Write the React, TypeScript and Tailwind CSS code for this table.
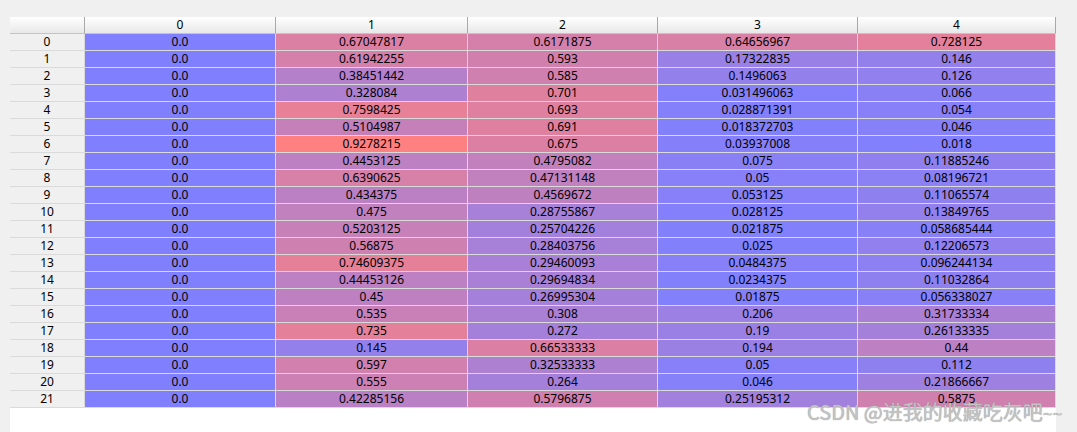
import React from "react";

const data: number[][] = [
  [0.67047817, 0.6171875, 0.64656967, 0.728125],
  [0.61942255, 0.593, 0.17322835, 0.146],
  [0.38451442, 0.585, 0.1496063, 0.126],
  [0.328084, 0.701, 0.031496063, 0.066],
  [0.7598425, 0.693, 0.028871391, 0.054],
  [0.5104987, 0.691, 0.018372703, 0.046],
  [0.9278215, 0.675, 0.03937008, 0.018],
  [0.4453125, 0.4795082, 0.075, 0.11885246],
  [0.6390625, 0.47131148, 0.05, 0.08196721],
  [0.434375, 0.4569672, 0.053125, 0.11065574],
  [0.475, 0.28755867, 0.028125, 0.13849765],
  [0.5203125, 0.25704226, 0.021875, 0.058685444],
  [0.56875, 0.28403756, 0.025, 0.12206573],
  [0.74609375, 0.29460093, 0.0484375, 0.096244134],
  [0.44453126, 0.29694834, 0.0234375, 0.11032864],
  [0.45, 0.26995304, 0.01875, 0.056338027],
  [0.535, 0.308, 0.206, 0.31733334],
  [0.735, 0.272, 0.19, 0.26133335],
  [0.145, 0.66533333, 0.194, 0.44],
  [0.597, 0.32533333, 0.05, 0.112],
  [0.555, 0.264, 0.046, 0.21866667],
  [0.42285156, 0.5796875, 0.25195312, 0.5875],
];

const labels: string[][] = [
  ["0.67047817", "0.6171875", "0.64656967", "0.728125"],
  ["0.61942255", "0.593", "0.17322835", "0.146"],
  ["0.38451442", "0.585", "0.1496063", "0.126"],
  ["0.328084", "0.701", "0.031496063", "0.066"],
  ["0.7598425", "0.693", "0.028871391", "0.054"],
  ["0.5104987", "0.691", "0.018372703", "0.046"],
  ["0.9278215", "0.675", "0.03937008", "0.018"],
  ["0.4453125", "0.4795082", "0.075", "0.11885246"],
  ["0.6390625", "0.47131148", "0.05", "0.08196721"],
  ["0.434375", "0.4569672", "0.053125", "0.11065574"],
  ["0.475", "0.28755867", "0.028125", "0.13849765"],
  ["0.5203125", "0.25704226", "0.021875", "0.058685444"],
  ["0.56875", "0.28403756", "0.025", "0.12206573"],
  ["0.74609375", "0.29460093", "0.0484375", "0.096244134"],
  ["0.44453126", "0.29694834", "0.0234375", "0.11032864"],
  ["0.45", "0.26995304", "0.01875", "0.056338027"],
  ["0.535", "0.308", "0.206", "0.31733334"],
  ["0.735", "0.272", "0.19", "0.26133335"],
  ["0.145", "0.66533333", "0.194", "0.44"],
  ["0.597", "0.32533333", "0.05", "0.112"],
  ["0.555", "0.264", "0.046", "0.21866667"],
  ["0.42285156", "0.5796875", "0.25195312", "0.5875"],
];

const VMAX = 0.9278215;

function colorFor(v: number): string {
  const t = Math.max(0, Math.min(1, v / VMAX));
  const r = Math.round(128 + 127 * t);
  const b = Math.round(255 - 127 * t);
  return `rgb(${r},128,${b})`;
}

export default function App() {
  return (
    <div
      className="relative w-[1077px] h-[432px] overflow-hidden bg-[#f0f0f0] pt-[17px] pl-[10px] text-[12px] text-black"
      style={{ fontFamily: '"Noto Sans", "Open Sans", sans-serif' }}
    >
      <div className="w-[1046px] h-[415px] bg-white">
        {/* header */}
        <div className="flex h-[17px] border-b border-[#c4c4c4] bg-gradient-to-b from-[#ffffff] to-[#e8e8e8] leading-[16px]">
          <div className="w-[74px] border-r border-[#a8a8a8] box-content" />
          <div className="w-[190px] border-r border-[#a8a8a8] box-content text-center">0</div>
          <div className="w-[191px] border-r border-[#a8a8a8] box-content text-center">1</div>
          <div className="w-[189px] border-r border-[#a8a8a8] box-content text-center">2</div>
          <div className="w-[199px] border-r border-[#a8a8a8] box-content text-center">3</div>
          <div className="w-[197px] border-r border-[#a8a8a8] box-content text-center">4</div>
        </div>
        {/* body */}
        <div className="grid grid-cols-[74px_190px_191px_189px_199px_197px] auto-rows-[16px] gap-px bg-[#dadada] pr-px pb-px leading-[16px]">
          {data.map((row, i) => (
            <React.Fragment key={i}>
              <div className="bg-[#f0f0f0] text-center">{i}</div>
              <div className="text-center" style={{ backgroundColor: colorFor(0) }}>
                0.0
              </div>
              {row.map((v, j) => (
                <div key={j} className="text-center" style={{ backgroundColor: colorFor(v) }}>
                  {labels[i][j]}
                </div>
              ))}
            </React.Fragment>
          ))}
        </div>
      </div>
      <div
        className="absolute left-[807px] top-[399px] text-[20px] leading-[26px] text-[#c4c4c4] whitespace-nowrap"
        style={{ fontFamily: '"Noto Sans CJK SC", sans-serif', textShadow: "0 0 1px #8a8a8a" }}
      >
        CSDN @进我的收藏吃灰吧
        <span style={{ fontFamily: '"Noto Sans", sans-serif' }} className="text-[17px]">~~</span>
      </div>
    </div>
  );
}
